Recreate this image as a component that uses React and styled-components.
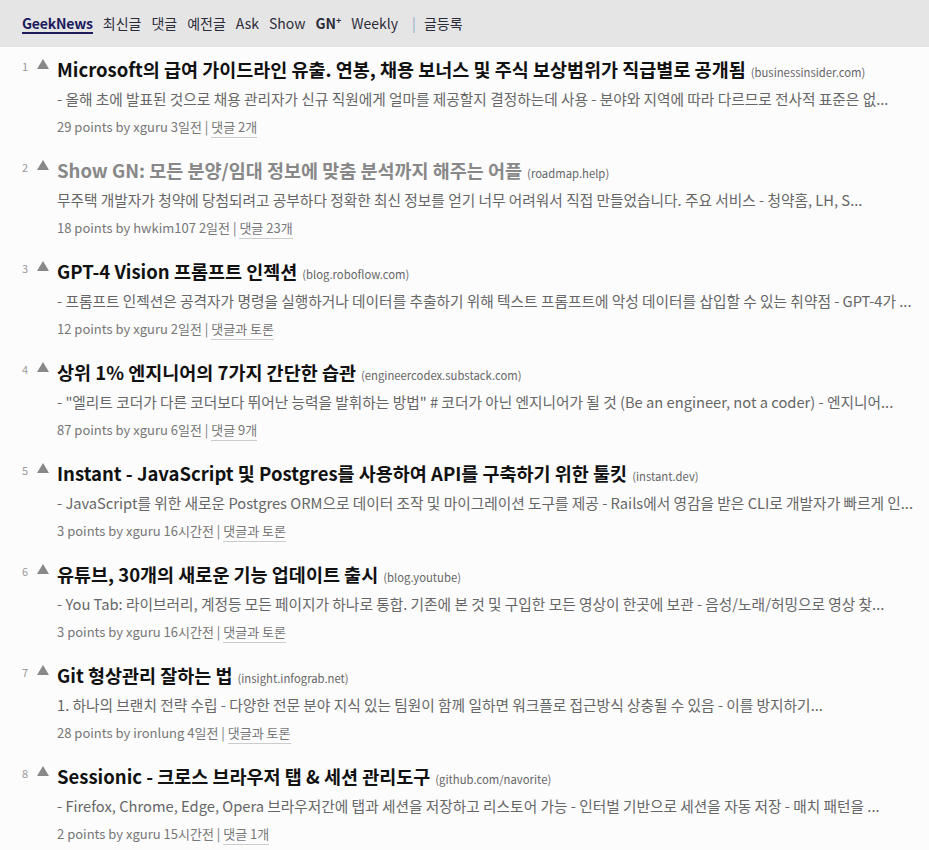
import React from 'react';
import styled, { createGlobalStyle } from 'styled-components';

const topics = [
	{
		title: 'Microsoft의 급여 가이드라인 유출. 연봉, 채용 보너스 및 주식 보상범위가 직급별로 공개됨',
		domain: 'businessinsider.com',
		desc: '- 올해 초에 발표된 것으로 채용 관리자가 신규 직원에게 얼마를 제공할지 결정하는데 사용 - 분야와 지역에 따라 다르므로 전사적 표준은 없...',
		points: 29,
		user: 'xguru',
		time: '3일전',
		comments: '댓글 2개',
	},
	{
		title: 'Show GN: 모든 분양/임대 정보에 맞춤 분석까지 해주는 어플',
		domain: 'roadmap.help',
		desc: '무주택 개발자가 청약에 당첨되려고 공부하다 정확한 최신 정보를 얻기 너무 어려워서 직접 만들었습니다. 주요 서비스 - 청약홈, LH, S...',
		points: 18,
		user: 'hwkim107',
		time: '2일전',
		comments: '댓글 23개',
		visited: true,
	},
	{
		title: 'GPT-4 Vision 프롬프트 인젝션',
		domain: 'blog.roboflow.com',
		desc: '- 프롬프트 인젝션은 공격자가 명령을 실행하거나 데이터를 추출하기 위해 텍스트 프롬프트에 악성 데이터를 삽입할 수 있는 취약점 - GPT-4가 ...',
		points: 12,
		user: 'xguru',
		time: '2일전',
		comments: '댓글과 토론',
	},
	{
		title: '상위 1% 엔지니어의 7가지 간단한 습관',
		domain: 'engineercodex.substack.com',
		desc: '- "엘리트 코더가 다른 코더보다 뛰어난 능력을 발휘하는 방법" # 코더가 아닌 엔지니어가 될 것 (Be an engineer, not a coder) - 엔지니어...',
		points: 87,
		user: 'xguru',
		time: '6일전',
		comments: '댓글 9개',
	},
	{
		title: 'Instant - JavaScript 및 Postgres를 사용하여 API를 구축하기 위한 툴킷',
		domain: 'instant.dev',
		desc: '- JavaScript를 위한 새로운 Postgres ORM으로 데이터 조작 및 마이그레이션 도구를 제공 - Rails에서 영감을 받은 CLI로 개발자가 빠르게 인...',
		points: 3,
		user: 'xguru',
		time: '16시간전',
		comments: '댓글과 토론',
	},
	{
		title: '유튜브, 30개의 새로운 기능 업데이트 출시',
		domain: 'blog.youtube',
		desc: '- You Tab: 라이브러리, 계정등 모든 페이지가 하나로 통합. 기존에 본 것 및 구입한 모든 영상이 한곳에 보관 - 음성/노래/허밍으로 영상 찾...',
		points: 3,
		user: 'xguru',
		time: '16시간전',
		comments: '댓글과 토론',
	},
	{
		title: 'Git 형상관리 잘하는 법',
		domain: 'insight.infograb.net',
		desc: '1. 하나의 브랜치 전략 수립 - 다양한 전문 분야 지식 있는 팀원이 함께 일하면 워크플로 접근방식 상충될 수 있음 - 이를 방지하기...',
		points: 28,
		user: 'ironlung',
		time: '4일전',
		comments: '댓글과 토론',
	},
	{
		title: 'Sessionic - 크로스 브라우저 탭 & 세션 관리도구',
		domain: 'github.com/navorite',
		desc: '- Firefox, Chrome, Edge, Opera 브라우저간에 탭과 세션을 저장하고 리스토어 가능 - 인터벌 기반으로 세션을 자동 저장 - 매치 패턴을 ...',
		points: 2,
		user: 'xguru',
		time: '15시간전',
		comments: '댓글 1개',
	},
];

const navLinks = ['최신글', '댓글', '예전글', 'Ask', 'Show'];

export default function App() {
	return (
		<>
			<GlobalStyle />
			<Page>
				<Nav>
					<Brand>GeekNews</Brand>
					{navLinks.map((link) => (
						<NavLink key={link}>{link}</NavLink>
					))}
					<NavLink bold>
						GN<sup>+</sup>
					</NavLink>
					<NavLink>Weekly</NavLink>
					<Divider>|</Divider>
					<NavLink>글등록</NavLink>
				</Nav>
				<List>
					{topics.map((topic, i) => (
						<Topic key={topic.title}>
							<Rank>{i + 1}</Rank>
							<Vote />
							<Body>
								<TitleRow>
									<Title visited={topic.visited}>{topic.title}</Title>
									<Domain>({topic.domain})</Domain>
								</TitleRow>
								<Desc>{topic.desc}</Desc>
								<Meta>
									{topic.points} points by {topic.user} {topic.time} |{' '}
									<CommentLink>{topic.comments}</CommentLink>
								</Meta>
							</Body>
						</Topic>
					))}
				</List>
			</Page>
		</>
	);
}

const GlobalStyle = createGlobalStyle`
	body {
		margin: 0;
		background: #fcfcfd;
		font-family: "Noto Sans CJK KR", "Noto Sans", sans-serif;
	}
`;

const Page = styled.div`
	width: 100%;
`;

const Nav = styled.nav`
	display: flex;
	align-items: center;
	gap: 10px;
	height: 47px;
	padding: 0 22px;
	background: #e5e5e5;
	font-size: 14px;
	color: #333;
`;

const Brand = styled.span`
	font-weight: bold;
	color: #1b1b5e;
	border-bottom: 2px solid #1b1b5e;
	line-height: 17px;
	margin-top: 1px;
	letter-spacing: -0.2px;
`;

const NavLink = styled.span`
	font-weight: ${({ bold }) => (bold ? 'bold' : 'normal')};
	color: #2d2d3a;
	margin-top: -2px;

	sup {
		font-size: 9px;
		vertical-align: 5px;
		line-height: 0;
	}
`;

const Divider = styled.span`
	color: #8fa8c8;
	margin: -2px -2px 0 4px;
`;

const List = styled.div`
	display: flex;
	flex-direction: column;
	gap: 14px;
	padding-top: 8px;
`;

const Topic = styled.div`
	display: flex;
	align-items: flex-start;
`;

const Rank = styled.div`
	width: 28px;
	text-align: right;
	font-size: 11px;
	color: #999;
	line-height: 12px;
	padding-top: 5px;
`;

const Vote = styled.div`
	width: 0;
	height: 0;
	margin: 4px 8px 0 9px;
	border-left: 6px solid transparent;
	border-right: 6px solid transparent;
	border-bottom: 10px solid #888;
`;

const Body = styled.div`
	min-width: 0;
`;

const TitleRow = styled.div`
	height: 30px;
	line-height: 28px;
	white-space: nowrap;
`;

const Title = styled.span`
	font-size: 18.5px;
	font-weight: bold;
	color: ${({ visited }) => (visited ? '#888' : '#111')};
	margin-right: 5px;
`;

const Domain = styled.span`
	font-size: 11.3px;
	line-height: 1;
	color: #666;
`;

const Desc = styled.div`
	height: 28px;
	font-size: 14.7px;
	line-height: 28px;
	color: #666;
	white-space: nowrap;
`;

const Meta = styled.div`
	height: 29px;
	font-size: 13px;
	line-height: 28px;
	color: #777;
`;

const CommentLink = styled.span`
	border-bottom: 1px solid #ccc;
	padding-bottom: 1px;
`;
